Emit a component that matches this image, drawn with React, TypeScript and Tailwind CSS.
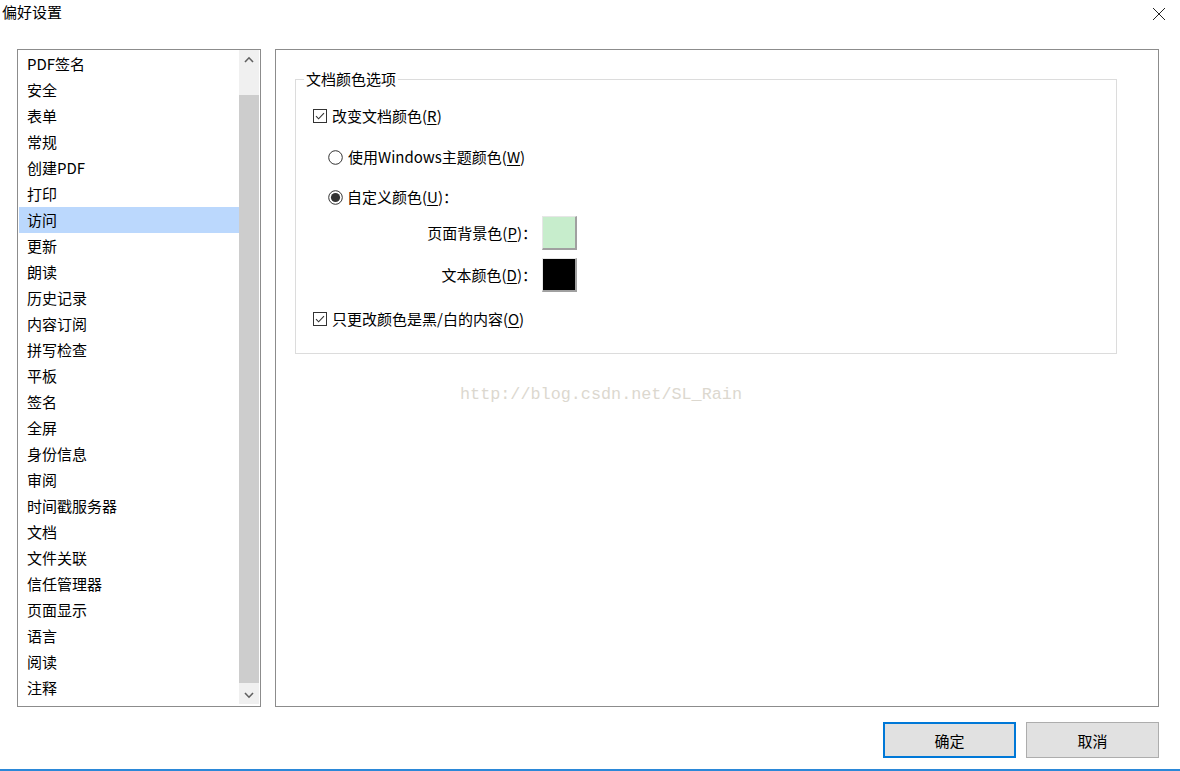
import React from 'react';

const font = { fontFamily: '"Noto Sans CJK SC", "Noto Sans", sans-serif' };

const categories = [
  'PDF签名', '安全', '表单', '常规', '创建PDF', '打印', '访问', '更新', '朗读', '历史记录',
  '内容订阅', '拼写检查', '平板', '签名', '全屏', '身份信息', '审阅', '时间戳服务器', '文档',
  '文件关联', '信任管理器', '页面显示', '语言', '阅读', '注释',
];

const Mnemonic: React.FC<{ label: string; letter: string; colon?: boolean }> = ({ label, letter, colon }) => (
  <span>
    {label}(<span className="underline underline-offset-2">{letter}</span>){colon ? '：' : ''}
  </span>
);

const CheckBox: React.FC = () => (
  <svg width="14" height="14" viewBox="0 0 14 14" className="shrink-0">
    <rect x="0.5" y="0.5" width="13" height="13" fill="#fff" stroke="#333" />
    <path d="M3 7.2 L5.6 9.8 L11 4.2" fill="none" stroke="#333" strokeWidth="1.1" />
  </svg>
);

const Radio: React.FC<{ checked?: boolean }> = ({ checked }) => (
  <svg width="15" height="15" viewBox="0 0 15 15" className="shrink-0">
    <circle cx="7.5" cy="7.5" r="6.8" fill="#fff" stroke="#333" strokeWidth="1" />
    {checked && <circle cx="7.5" cy="7.5" r="4.6" fill="#333" />}
  </svg>
);

const Chevron: React.FC<{ up?: boolean }> = ({ up }) => (
  <svg width="10" height="7" viewBox="0 0 10 7">
    <path d={up ? 'M1 6 L5 1.8 L9 6' : 'M1 1 L5 5.2 L9 1'} fill="none" stroke="#606060" strokeWidth="1.6" />
  </svg>
);

const ColorRow: React.FC<{ label: string; letter: string; color: string; mt: string }> = ({ label, letter, color, mt }) => (
  <div className={`flex items-center h-[34px] ${mt}`}>
    <div className="w-[241px] text-right">
      <Mnemonic label={label} letter={letter} colon />
    </div>
    <div
      className={`ml-[5px] w-[35px] h-[34px] border-t border-l border-[#e6e6e6] border-r-2 border-b-2 border-r-[#a0a0a0] border-b-[#a0a0a0] ${color}`}
    />
  </div>
);

const App: React.FC = () => {
  return (
    <div className="relative w-[1180px] h-[771px] bg-white text-black text-[15px] flex flex-col overflow-hidden" style={font}>
      {/* title bar */}
      <div className="h-[49px] flex justify-between items-start shrink-0">
        <div className="pl-[2px] pt-[2px] text-[15px] leading-[20px]">偏好设置</div>
        <svg width="14" height="14" viewBox="0 0 14 14" className="mt-[7px] mr-[14px]">
          <path d="M1 1 L13 13 M13 1 L1 13" stroke="#222" strokeWidth="1" />
        </svg>
      </div>

      <div className="flex shrink-0">
        {/* category list */}
        <div className="ml-[17px] w-[244px] h-[658px] border border-[#8c8c8c] flex">
          <div className="w-[220px] ml-[1px] pt-[1px]">
            {categories.map((c) => (
              <div
                key={c}
                className={`h-[26px] leading-[26px] pl-[8px] ${c === '访问' ? 'bg-[#bbd8fd]' : ''}`}
              >
                {c}
              </div>
            ))}
          </div>
          <div className="w-[20px] h-[654px] bg-[#f0f0f0] flex flex-col">
            <div className="h-[17px] flex items-center justify-center pt-[2px]">
              <Chevron up />
            </div>
            <div className="h-[28px]" />
            <div className="h-[588px] bg-[#cdcdcd]" />
            <div className="h-[4px]" />
            <div className="h-[17px] flex items-center justify-center">
              <Chevron />
            </div>
          </div>
        </div>

        {/* settings panel */}
        <div className="ml-[14px] w-[884px] h-[658px] border border-[#8c8c8c]">
          <fieldset className="mt-[19px] ml-[19px] w-[822px] h-[285px] border border-[#dcdcdc] px-0">
            <legend className="ml-[8px] px-[2px] leading-[20px]">文档颜色选项</legend>
            <div className="flex items-center h-[24px] mt-[15px] pl-[17px] gap-[5px]">
              <CheckBox />
              <Mnemonic label="改变文档颜色" letter="R" />
            </div>
            <div className="flex items-center h-[24px] mt-[17px] pl-[32px] gap-[5px]">
              <Radio />
              <Mnemonic label="使用Windows主题颜色" letter="W" />
            </div>
            <div className="flex items-center h-[24px] mt-[16px] pl-[32px] gap-[4px]">
              <Radio checked />
              <Mnemonic label="自定义颜色" letter="U" colon />
            </div>
            <ColorRow label="页面背景色" letter="P" color="bg-[#c7edcc]" mt="mt-[7px]" />
            <ColorRow label="文本颜色" letter="D" color="bg-black" mt="mt-[8px]" />
            <div className="flex items-center h-[24px] mt-[15px] pl-[17px] gap-[5px]">
              <CheckBox />
              <Mnemonic label="只更改颜色是黑/白的内容" letter="O" />
            </div>
          </fieldset>
        </div>
      </div>

      {/* buttons */}
      <div className="flex justify-end gap-[10px] pr-[21px] mt-[15px] shrink-0">
        <button className="w-[133px] h-[36px] bg-[#e1e1e1] border-2 border-[#0078d7] leading-none">确定</button>
        <button className="w-[133px] h-[36px] bg-[#e1e1e1] border border-[#adadad] leading-none">取消</button>
      </div>

      <div className="mt-auto h-[2px] bg-[#2b88d8] shrink-0" />

      {/* watermark */}
      <div
        className="absolute left-[460px] top-[385px] text-[16.8px] leading-[20px] text-[#dcd8cf] pointer-events-none"
        style={{ fontFamily: '"Liberation Mono", monospace' }}
      >
        http://blog.csdn.net/SL_Rain
      </div>
    </div>
  );
};

export default App;
